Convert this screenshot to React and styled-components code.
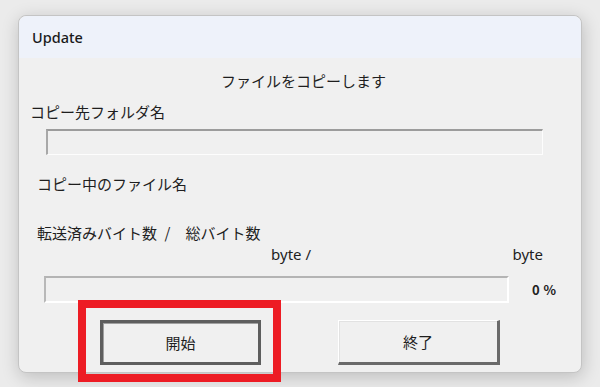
import React from "react";
import styled, { createGlobalStyle } from "styled-components";

const GlobalStyle = createGlobalStyle`
	html, body {
		margin: 0;
		padding: 0;
		background: #ebebeb;
		width: 600px;
		height: 387px;
		overflow: hidden;
	}
	body {
		font-family: "Noto Sans CJK JP", "Noto Sans", sans-serif;
		color: #1e1e1e;
	}
`;

// dialog frame
const Window = styled.div`
	margin: 15px 0 0 18px;
	width: 564px;
	height: 358px;
	box-sizing: border-box;
	border: 1px solid #c4c4c4;
	border-radius: 8px;
	background: #f0f0f0;
	box-shadow: 1px 4px 18px rgba(0, 0, 0, 0.2);
	display: flex;
	flex-direction: column;
`;

const TitleBar = styled.div`
	height: 42px;
	flex: none;
	display: flex;
	align-items: center;
	padding-left: 13px;
	background: #eef2fa;
	border-radius: 8px 8px 0 0;
	font-family: "Noto Sans", "Open Sans", sans-serif;
	font-size: 14.5px;
	font-weight: 500;
	color: #1a1a1a;
`;

const Body = styled.div`
	display: flex;
	flex-direction: column;
	padding: 13px 0 8px 0;
`;

const Text = styled.div`
	font-size: 15px;
	line-height: 20px;
	height: 20px;
	white-space: nowrap;
	margin-top: ${(p) => p.top || 0}px;
	padding-left: ${(p) => p.left || 0}px;
	text-align: ${(p) => (p.center ? "center" : "left")};
`;

const Field = styled.div`
	margin: 7px 0 0 27px;
	width: 497px;
	height: 26px;
	box-sizing: border-box;
	background: #f0f0f0;
	border-top: 2px solid #9c9c9c;
	border-left: 2px solid #a8a8a8;
	border-right: 1px solid #fdfdfd;
	border-bottom: 1px solid #fdfdfd;
`;

const ByteRow = styled.div`
	margin-top: 1px;
	display: flex;
	height: 20px;
	font-family: "Noto Sans", "Liberation Sans", sans-serif;
	font-size: 15px;
	line-height: 20px;
`;

const ByteCell = styled.span`
	width: ${(p) => p.width}px;
	text-align: right;
	flex: none;
`;

const ProgressRow = styled.div`
	margin-top: 12px;
	display: flex;
	align-items: center;
	padding-left: 25px;
`;

const Progress = styled.div`
	width: 465px;
	height: 27px;
	box-sizing: border-box;
	background: #f0f0f0;
	border-top: 2px solid #b4b4b4;
	border-left: 2px solid #b8b8b8;
	border-right: 2px solid #ffffff;
	border-bottom: 2px solid #ffffff;
`;

const Percent = styled.span`
	margin-left: 23px;
	font-size: 13px;
	font-weight: 700;
	color: #222;
	letter-spacing: 0.5px;
`;

const ButtonRow = styled.div`
	margin-top: 17px;
	display: flex;
	padding-left: 81px;
	gap: 77px;
`;

const Button = styled.button`
	position: relative;
	width: ${(p) => (p.wide ? 162 : 161)}px;
	height: 45px;
	box-sizing: border-box;
	background: #f0f0f0;
	font-family: "Noto Sans CJK JP", sans-serif;
	font-size: 15px;
	color: #1e1e1e;
	padding: 0;
	border-style: solid;
	border-width: ${(p) => (p.primary ? "3px" : "1px 3px 3px 1px")};
	border-color: ${(p) =>
		p.primary ? "#5e5e5e" : "#ffffff #6a6a6a #6a6a6a #ffffff"};
	box-shadow: ${(p) =>
		p.primary ? "inset 1px 1px 0 #a0a0a0" : "inset 1px 1px 0 #e2e2e2"};
`;

// red annotation frame drawn over the start button
const Highlight = styled.span`
	position: absolute;
	top: -23px;
	left: -25px;
	right: -23px;
	bottom: -20px;
	border: 8px solid #ed1c24;
	pointer-events: none;
`;

function App() {
	return (
		<>
			<GlobalStyle />
			<Window>
				<TitleBar>Update</TitleBar>
				<Body>
					<Text center left={7}>
						ファイルをコピーします
					</Text>
					<Text top={11} left={11}>
						コピー先フォルダ名
					</Text>
					<Field />
					<Text top={19} left={18}>
						コピー中のファイル名
					</Text>
					<Text top={29} left={18}>
						転送済みバイト数{"\u2002"}/{"\u3000"}総バイト数
					</Text>
					<ByteRow>
						<ByteCell width={292}>byte /</ByteCell>
						<ByteCell width={232}>byte</ByteCell>
					</ByteRow>
					<ProgressRow>
						<Progress />
						<Percent>0 %</Percent>
					</ProgressRow>
					<ButtonRow>
						<Button primary>
							開始
							<Highlight />
						</Button>
						<Button wide>終了</Button>
					</ButtonRow>
				</Body>
			</Window>
		</>
	);
}

export default App;
